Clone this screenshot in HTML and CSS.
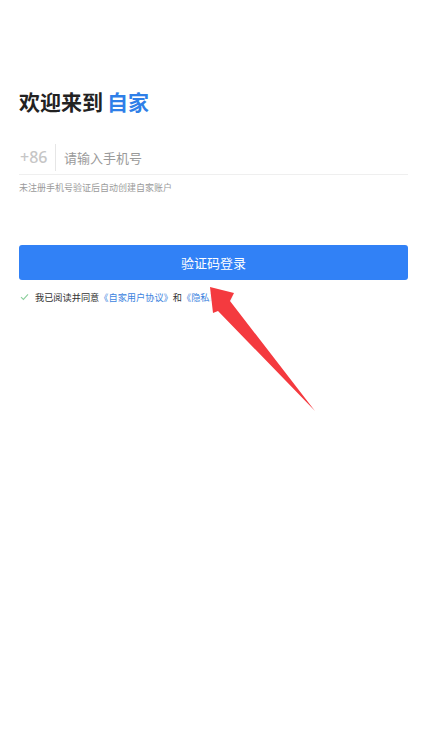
FILE: index.html
```html
<!DOCTYPE html>
<html lang="zh">
<head>
<meta charset="utf-8">
<title>登录</title>
<link rel="stylesheet" href="styles.css">
</head>
<body>
<div class="page">
  <h1 class="title">欢迎来到<span class="brand">自家</span></h1>
  <div class="phone-row">
    <span class="code">+86</span>
    <span class="divider"></span>
    <span class="placeholder">请输入手机号</span>
  </div>
  <p class="hint">未注册手机号验证后自动创建自家账户</p>
  <button class="login-btn">验证码登录</button>
  <div class="agree">
    <svg class="check" width="9" height="8" viewBox="0 0 9 8"><path d="M1 4.2 L3.4 6.4 L8 1.4" fill="none" stroke="#8ccf9c" stroke-width="1.1"/></svg>
    <span>我已阅读并同意</span><span class="link">《自家用户协议》</span><span>和</span><span class="link">《隐私政策》</span>
  </div>
</div>
<svg class="arrow" width="427" height="741" viewBox="0 0 427 741">
  <polygon points="210,287 234,293 230,301 315,411 218,311 213,313" fill="#ffffff" stroke="#ffffff" stroke-width="3" stroke-linejoin="round" opacity="0.9"/>
  <polygon points="210,287 234,293 230,301 315,411 218,311 213,313" fill="#f43a3f"/>
</svg>
</body>
</html>
```
FILE: styles.css
```css
html, body {
  margin: 0;
  padding: 0;
  background: #ffffff;
}
body {
  width: 427px;
  height: 741px;
  position: relative;
  overflow: hidden;
  font-family: "Noto Sans CJK SC", "Noto Sans", sans-serif;
}
.page {
  padding: 0 19px;
}
.title {
  margin: 88px 0 0 0;
  font-size: 21px;
  line-height: 26px;
  font-weight: 700;
  color: #222222;
}
.brand {
  color: #2f7fe8;
  margin-left: 4px;
}
.phone-row {
  margin-top: 26px;
  height: 34px;
  display: flex;
  align-items: center;
  border-bottom: 1px solid #efefef;
}
.code {
  font-family: "Noto Sans", sans-serif;
  font-weight: 500;
  font-size: 16px;
  color: #c6c6c6;
  width: 28px;
  padding-left: 1px;
}
.divider {
  width: 1px;
  height: 27px;
  background: #e6e6e6;
  margin-left: 7px;
  margin-right: 8px;
}
.placeholder {
  font-size: 13px;
  color: #9a9a9a;
}
.hint {
  margin: 6px 0 0 0;
  font-size: 9px;
  line-height: 14px;
  color: #9b9b9b;
}
.login-btn {
  display: block;
  width: 100%;
  margin-top: 50px;
  height: 35px;
  border: none;
  border-radius: 3px;
  background: #3181f6;
  color: #ffffff;
  font-family: "Noto Sans CJK SC", "Noto Sans", sans-serif;
  font-size: 13px;
  padding: 0;
}
.agree {
  margin-top: 10px;
  display: flex;
  align-items: center;
  font-size: 9.2px;
  line-height: 14px;
  color: #333333;
}
.check {
  margin-left: 1px;
  margin-right: 6px;
}
.link {
  color: #3d84e0;
}
.arrow {
  position: absolute;
  left: 0;
  top: 0;
}
```
